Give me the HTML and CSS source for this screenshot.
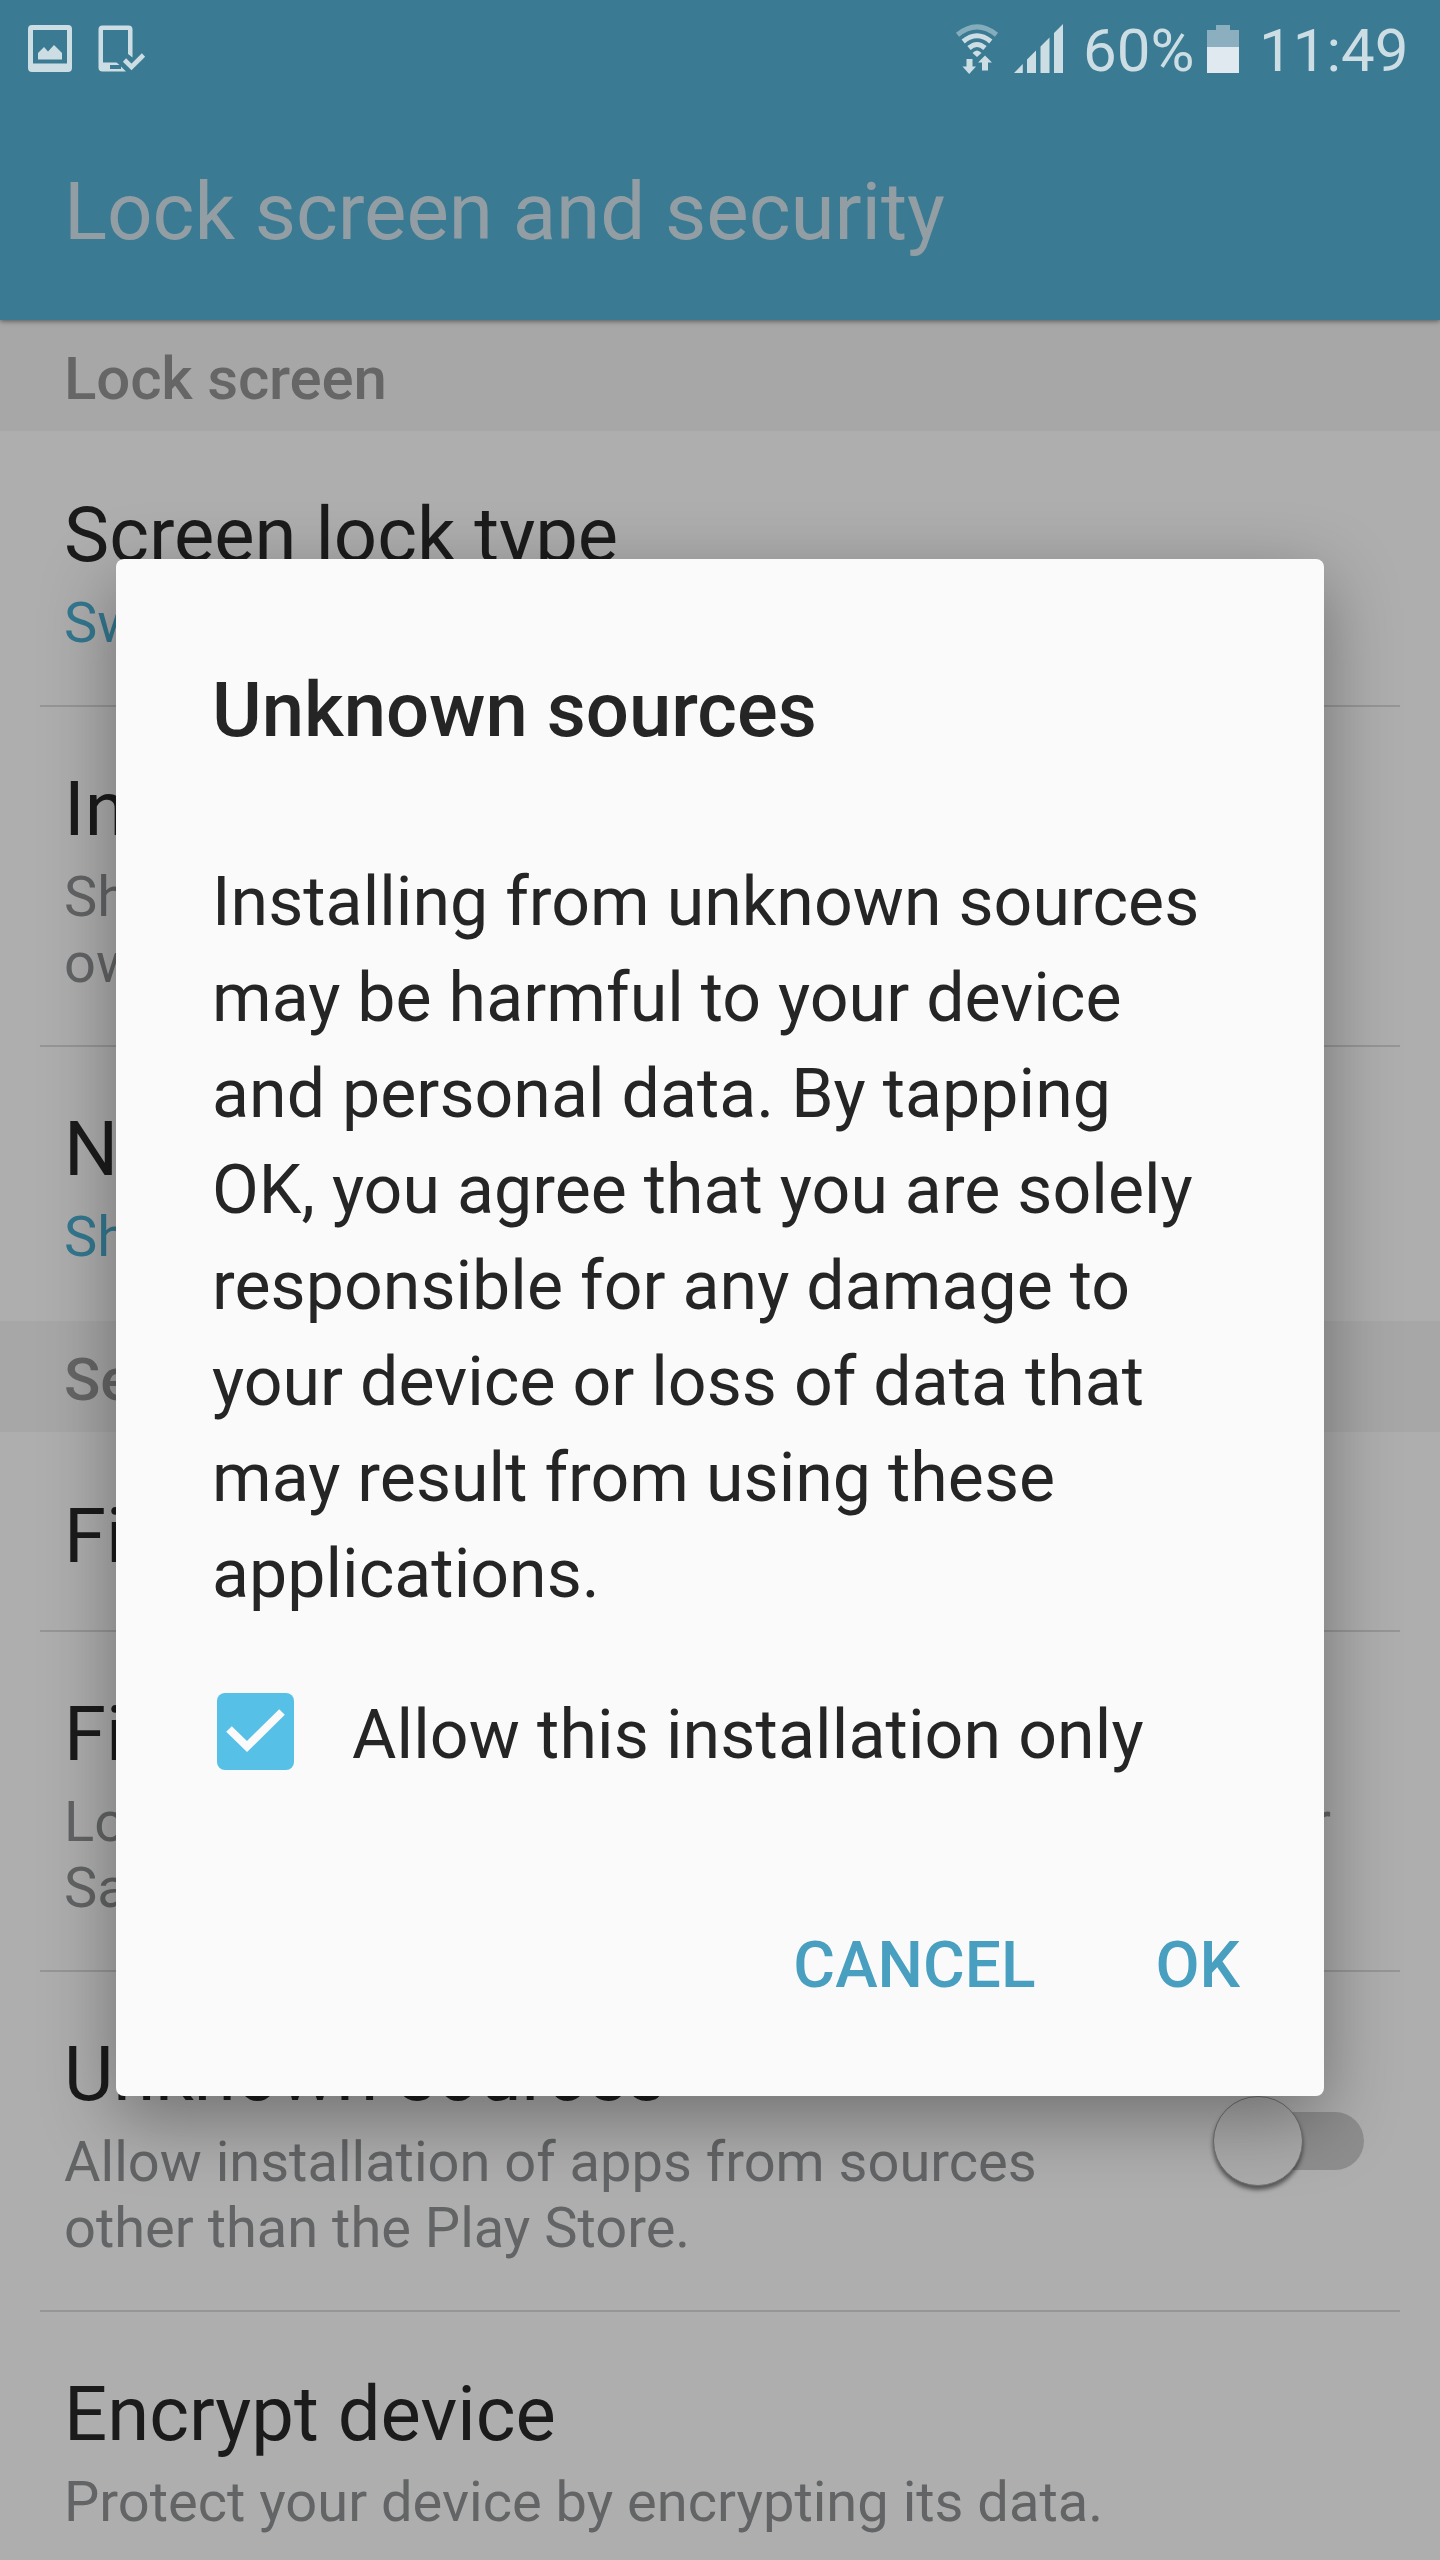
FILE: index.html
```html
<!DOCTYPE html>
<html lang="en">
<head>
<meta charset="utf-8">
<title>Lock screen and security</title>
<link rel="stylesheet" href="styles.css">
</head>
<body>
<div class="screen">
  <header class="header">
    <div class="status">
      <svg class="status-image" width="44" height="47" viewBox="28 25.500 44 47"><path fill="currentColor" fill-rule="evenodd" d="M32 25.500H68q4 0 4 4V68.500q0 4-4 4H32q-4 0-4-4V29.500q0-4 4-4ZM33 30.500V64H67V30.500ZM38 60V53.500L44 47.500L48 52L54 45.500L62 53.500V60Z"/></svg>
      <svg class="status-device" width="48" height="47" viewBox="98 25.500 48 47"><path fill="currentColor" fill-rule="evenodd" d="M102.500 26H128.500q4 0 4 4V58L128 54.500V30.500H103V63H116.500L119.500 65.500H110V69.500H121V67L126 72H102.500q-4 0-4-4V30q0-4 4-4Z"/><path fill="none" stroke="currentColor" stroke-width="4.600" d="M124.500 60.500L131.500 67.500L143.500 55.500"/></svg>
      <span class="grow"></span>
      <svg class="status-wifi" width="44" height="51" viewBox="954.500 23.500 44 51"><g fill="none" stroke="currentColor" stroke-width="5"><path opacity=".5" d="M957 34.300Q976.500 18.500 996 34.300"/><path d="M962.700 41Q976.500 29.500 990.300 41"/><path d="M968.500 47.500Q976.500 40.500 984.500 47.500"/></g><path fill="currentColor" d="M976.500 56.500L972 52.500Q976.500 47.500 981 52.500ZM966 58.500H972V66H975.500L968.700 73.500L962 66H966ZM984.500 55L991.500 62H987.500V70H981.500V62H977.500Z"/></svg>
      <svg class="status-signal" width="49" height="49" viewBox="1014 24 49 49"><path fill="currentColor" d="M1014 73L1022.800 64V73ZM1027 73V59.500L1036 50.500V73ZM1040.500 73V46.500L1049.500 37.500V73ZM1054 73V33L1063 24V73Z"/></svg>
      <span class="status-percent">60%</span>
      <svg class="status-battery" width="32" height="48" viewBox="0 0 32 48"><path fill="#8bafbe" d="M9 0H23V5H32V48H0V5H9Z"/><path fill="#e1e9f0" d="M0 22H32V48H0Z"/></svg>
      <span class="status-time">11:49</span>
    </div>
    <h1 class="header-title">Lock screen and security</h1>
  </header>
  <main class="list">
    <h2 class="section">Lock screen</h2>
    <div class="item first"><div class="item-title">Screen lock type</div><div class="item-sub link">Swipe</div></div>
    <div class="item"><div class="item-title">Info and app shortcuts</div><div class="item-sub">Show info and app shortcuts, and your<br>owner information.</div></div>
    <div class="item last"><div class="item-title">Notifications on lock screen</div><div class="item-sub link">Show content</div></div>
    <h2 class="section">Security</h2>
    <div class="item single"><div class="item-title">Fingerprints</div></div>
    <div class="item"><div class="item-title">Find My Mobile</div><div class="item-sub wide">Locate and control your device remotely using your<br>Samsung account.</div></div>
    <div class="item with-switch">
      <div><div class="item-title">Unknown sources</div><div class="item-sub">Allow installation of apps from sources<br>other than the Play Store.</div></div>
      <div class="switch"><div class="thumb"></div></div>
    </div>
    <div class="item last"><div class="item-title">Encrypt device</div><div class="item-sub">Protect your device by encrypting its data.</div></div>
  </main>
  <section class="dialog">
    <h2 class="dialog-title">Unknown sources</h2>
    <p class="dialog-text">Installing from unknown sources<br>may be harmful to your device<br>and personal data. By tapping<br>OK, you agree that you are solely<br>responsible for any damage to<br>your device or loss of data that<br>may result from using these<br>applications.</p>
    <div class="option">
      <svg class="checkbox" width="77" height="77" viewBox="0 0 77 77"><rect width="77" height="77" rx="8" fill="#57c0e6"/><path fill="none" stroke="#fafafa" stroke-width="8" d="M12 36L30 53.500L65 19"/></svg>
      <span class="option-label">Allow this installation only</span>
    </div>
    <div class="actions"><span>CANCEL</span><span>OK</span></div>
  </section>
</div>
</body>
</html>
```
FILE: styles.css
```css
* { box-sizing: border-box; }
body { margin: 0; font-family: Roboto, "Noto Sans", sans-serif; }
h1, h2, p { margin: 0; font-weight: 400; }
.screen { position: relative; width: 1440px; height: 2560px; overflow: hidden; background: #aeaeae; }

.header { position: relative; height: 320px; background: #3a7b93; box-shadow: 0 1px 5px rgba(0, 0, 0, .5); }
.status { display: flex; align-items: flex-start; height: 100px; color: #cddde4; font-size: 60px; line-height: 70px; white-space: nowrap; }
.status svg { display: block; flex: none; }
.status-image { margin: 25px 0 0 28px; }
.status-device { margin: 25px 0 0 26px; }
.grow { flex: 1; }
.status-wifi { margin-top: 24px; }
.status-signal { margin: 24px 0 0 15px; }
.status-percent { width: 124px; margin: 16px 0 0 20px; }
.status-battery { margin-top: 25px; }
.status-time { width: 181px; margin: 16px 0 0 20px; }
.header-title { padding: 65px 64px 0; font-size: 80px; line-height: 94px; letter-spacing: -.06px; color: #939ea4; white-space: nowrap; }

.section { height: 111px; padding: 24px 64px 0; background: #a7a7a7; color: #666; font-size: 60px; line-height: 70px; font-weight: 500; letter-spacing: -.15px; }
.item { height: 340px; margin: 0 40px; padding: 57px 24px 0; border-bottom: 2px solid #969696; white-space: nowrap; }
.item.first { height: 276px; padding-top: 59px; }
.item.last { height: 274px; border-bottom: 0; }
.item.single { height: 200px; padding-top: 59px; }
.item-title { font-size: 76px; line-height: 90px; color: #1b1b1b; }
.item-sub { margin-top: 10px; font-size: 56px; line-height: 66px; color: #626465; }
.wide { letter-spacing: .06px; }
.link { color: #347890; }
.with-switch { display: flex; justify-content: space-between; }
.switch { width: 150px; height: 58px; margin: 83px 12px 0 0; border-radius: 29px; background: #8e8e8e; }
.thumb { width: 90px; height: 90px; margin: -16px 0 0 -1px; border-radius: 50%; background: #aaa; border: 1px solid #707070; box-shadow: 0 4px 4px rgba(0, 0, 0, .5); }

.dialog { position: absolute; left: 116px; top: 559px; width: 1208px; height: 1537px; padding: 106px 84px 0 96px; border-radius: 8px; background: #fafafa; color: #252525; box-shadow: 0 22px 72px rgba(0, 0, 0, .36); white-space: nowrap; }
.dialog-title { font-size: 76px; line-height: 90px; font-weight: 500; }
.dialog-text { margin-top: 99px; font-size: 68px; line-height: 96px; letter-spacing: .05px; }
.option { display: flex; align-items: flex-start; margin-top: 71px; }
.checkbox { display: block; margin: 0 0 0 5px; }
.option-label { margin: 2px 0 0 58px; font-size: 68px; line-height: 80px; letter-spacing: .14px; }
.actions { display: flex; justify-content: flex-end; gap: 120px; margin-top: 153px; font-size: 64px; line-height: 76px; font-weight: 500; color: #489fbf; }
```
